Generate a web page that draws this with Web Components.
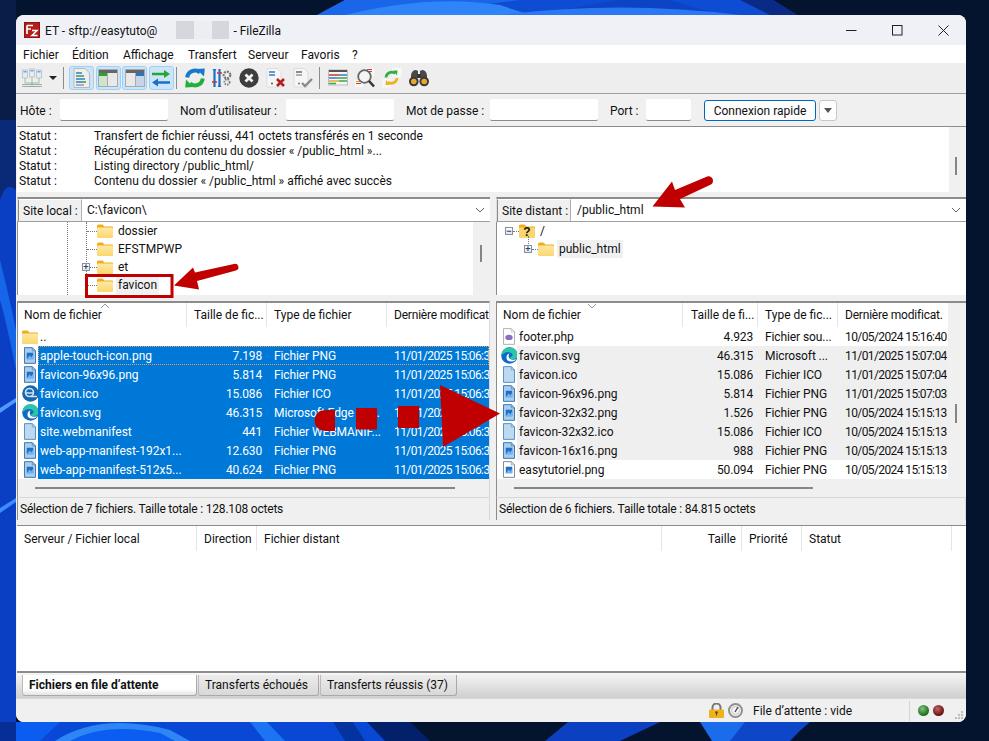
<!DOCTYPE html>
<html lang="fr"><head><meta charset="utf-8"><title>FileZilla</title>
<style>html,body{margin:0;padding:0;background:#04142e}body{font:12px Roboto,"Liberation Sans",sans-serif;color:#111}</style>
</head><body>
<fz-desktop>
  <fz-window>
    <fz-titlebar></fz-titlebar>
    <fz-menubar></fz-menubar>
    <fz-toolbar></fz-toolbar>
    <fz-quickconnect></fz-quickconnect>
    <fz-log></fz-log>
    <fz-panes></fz-panes>
    <fz-queue></fz-queue>
    <fz-tabs></fz-tabs>
    <fz-statusbar></fz-statusbar>
  </fz-window>
</fz-desktop>
<script>
const FONT = 'Roboto,"Liberation Sans",sans-serif';
const doc = (fill, stroke, inner='') => `<svg viewBox="0 0 13 18" width="12" height="17"><path d="M.5.5H9L12.5 4V17.500H.5z" fill="${fill}" stroke="${stroke}"/><path d="M9 .5V4h3.500" fill="none" stroke="${stroke}" opacity=".6"/>${inner}</svg>`;
const pic = `<rect x="3" y="6" width="7" height="7" fill="#1f6fc4"/><path d="M3 13l3-4 2 2 2-3v5z" fill="#6fb3ee"/>`;
const ICONS = {
 folder:`<svg viewBox="0 0 16 14" width="16" height="14"><defs><linearGradient id="g" x1="0" y1="0" x2="0" y2="1"><stop offset="0" stop-color="#fde9a6"/><stop offset="1" stop-color="#fbd66c"/></linearGradient></defs><path d="M0 2Q0 .5 1.500 .5H5.500L7.500 2.500H15Q16 2.500 16 3.500V6H0z" fill="#f2ad1c"/><rect y="3.500" width="16" height="10.500" rx="1.200" fill="url(#g)"/></svg>`,
 qfolder:`<svg viewBox="0 0 16 14" width="16" height="14"><path d="M0 2Q0 .5 1.500 .5H5.500L7.500 2.500H15Q16 2.500 16 3.500V6H0z" fill="#f2ad1c"/><rect y="3.500" width="16" height="10.500" rx="1.200" fill="#fbd66c"/><text x="8" y="12" text-anchor="middle" font-family="Liberation Sans" font-weight="700" font-size="12" fill="#111">?</text></svg>`,
 png:doc('#fff','#6f7f90',pic), pngsel:doc('#a9cdee','#2f6ea8',pic), blank:doc('#bcd9f2','#4b86bd'), php:doc('#fff','#a9a9a9','<ellipse cx="6.500" cy="10" rx="4" ry="2.800" fill="#8a6fc0"/>'),
 edge:`<svg viewBox="0 0 17 17" width="17" height="17"><circle cx="8.500" cy="8.500" r="8.300" fill="#0c6cc4"/><path d="M.6 8A8 8 0 0 1 16.800 8.500Q16.500 12 12 12 9 12 9 10.500 13 9 11 6.500 6 3 .6 8" fill="#2ec4a8"/><path d="M11 14.500Q5 15 5.500 9.500 6 7 8.500 6.500 6.800 9 8.500 11.500 12 14 16 11.500 14 14 11 14.500" fill="#fff"/></svg>`,
 ico:`<svg viewBox="0 0 17 17" width="17" height="17"><circle cx="8.500" cy="8.500" r="8.300" fill="#1666ad"/><circle cx="7.500" cy="7.500" r="4" fill="none" stroke="#cfe4f6" stroke-width="1.600"/><path d="M4 8h7M9 11.500h6" stroke="#cfe4f6" stroke-width="1.400"/></svg>`,
 site:`<svg viewBox="0 0 20 20" width="20" height="20"><g fill="#e4edf5" stroke="#b5bfc9" stroke-width=".8"><rect x=".5" y="2" width="5" height="8"/><rect x="7.500" y="1" width="5" height="8"/><rect x="14.500" y="2" width="5" height="8"/></g><g fill="#6ea9dd"><rect x="1.500" y="3" width="3" height="1.500"/><rect x="8.500" y="2" width="3" height="1.500"/><rect x="15.500" y="3" width="3" height="1.500"/></g><path d="M3 10v5h14v-5M10 9v6" stroke="#9cc39c" fill="none"/><path d="M0 16.500h20M0 18.500h20" stroke="#a8a8a8"/><circle cx="10" cy="16" r="1.500" fill="#9bb"/></svg>`,
 logbtn:`<svg viewBox="0 0 18 20" width="18" height="20"><path d="M1 .5H12L16.500 5V19.500H1z" fill="#eee" stroke="#b8b8b8"/><g stroke-width="1.500"><path d="M3 5h6M3 14h6" stroke="#2e7cc4"/><path d="M3 8h8" stroke="#30a04a"/><path d="M3 11h9" stroke="#2e7cc4"/><path d="M9 14h4" stroke="#30a04a"/><path d="M3 17h8" stroke="#999"/></g></svg>`,
 treeL:`<svg viewBox="0 0 20 18" width="20" height="18"><rect x=".5" y=".5" width="19" height="17" fill="#e9e9e9" stroke="#aaa"/><rect x="1" y="1" width="18" height="3" fill="#666"/><rect x="1" y="4" width="8" height="3" fill="#2aa52a"/><rect x="1" y="7" width="8" height="10" fill="#cfe3cf"/><path d="M9.500 4v13" stroke="#aaa"/></svg>`,
 treeR:`<svg viewBox="0 0 20 18" width="20" height="18"><rect x=".5" y=".5" width="19" height="17" fill="#e9e9e9" stroke="#aaa"/><rect x="1" y="1" width="18" height="3" fill="#666"/><rect x="11" y="4" width="8" height="3" fill="#2277c8"/><rect x="11" y="7" width="8" height="10" fill="#c6d6e6"/><path d="M10.500 4v13" stroke="#aaa"/></svg>`,
 sync:`<svg viewBox="0 0 20 17" width="20" height="17"><path d="M1 4h13" stroke="#25a62e" stroke-width="2.400"/><path d="M13 0l6 4-6 4z" fill="#25a62e"/><path d="M6 12.500h13" stroke="#1c6fc4" stroke-width="2.400"/><path d="M7 8.500l-6 4 6 4z" fill="#1c6fc4"/></svg>`,
 refresh:`<svg viewBox="0 0 20 20" width="20" height="20"><path d="M2.200 9.500A7.800 7.800 0 0 1 15 4.500" fill="none" stroke="#1679cc" stroke-width="4"/><path d="M11.500 1L19.800 .5 19 8.500z" fill="#1679cc"/><path d="M17.800 10.500A7.800 7.800 0 0 1 5 15.500" fill="none" stroke="#22b03a" stroke-width="4"/><path d="M8.500 19L.2 19.500 1 11.500z" fill="#22b03a"/></svg>`,
 filter:`<svg viewBox="0 0 20 20" width="20" height="20"><path d="M2.500 1v18" stroke="#1c6fc4" stroke-width="2.200"/><path d="M7.500 1v18" stroke="#1c6fc4" stroke-width="2.200"/><path d="M1 1l1.500 2L4 1M6 19l1.500-2L9 19" fill="none" stroke="#1c6fc4"/><path d="M5 5h5M0 14h5" stroke="#c33" stroke-width="1.500"/><circle cx="15" cy="7" r="3.300" fill="none" stroke="#777" stroke-width="2.200" stroke-dasharray="2 1"/><circle cx="15" cy="14" r="2.600" fill="none" stroke="#777" stroke-width="1.800" stroke-dasharray="1.500 1"/></svg>`,
 cancel:`<svg viewBox="0 0 20 20" width="20" height="20"><circle cx="10" cy="10" r="9.700" fill="#3d3d3d"/><path d="M6.500 6.500l7 7M13.500 6.500l-7 7" stroke="#f2f2f2" stroke-width="2.800"/></svg>`,
 discX:`<svg viewBox="0 0 20 20" width="20" height="20"><path d="M1 .5H11L15 4V19H1z" fill="#f6f6f6" stroke="#ddd"/><path d="M3 4h6" stroke="#2e7cc4" stroke-width="1.500"/><path d="M3 7h6" stroke="#2e7cc4" stroke-width="1.500"/><circle cx="6" cy="15.500" r=".9" fill="#444"/><path d="M11 11l7 7M18 11l-7 7" stroke="#b31d1d" stroke-width="2.600"/></svg>`,
 discC:`<svg viewBox="0 0 20 20" width="20" height="20"><path d="M1 .5H11L15 4V19H1z" fill="#f6f6f6" stroke="#ddd"/><path d="M3 4h6" stroke="#666" stroke-width="1.500"/><path d="M3 7h6" stroke="#999" stroke-width="1.500"/><circle cx="6" cy="15.500" r=".9" fill="#666"/><path d="M9 15l3 3 7-7" fill="none" stroke="#8a8a8a" stroke-width="2.400"/></svg>`,
 table:`<svg viewBox="0 0 20 18" width="20" height="18"><rect x=".5" y="1" width="19" height="15" fill="#f7f7f7" stroke="#bbb"/><rect x="1" y="1" width="18" height="2" fill="#555"/><path d="M1 6h10" stroke="#c33" stroke-width="1.400"/><path d="M11 6h8" stroke="#2e7cc4" stroke-width="1.400"/><path d="M1 9h8" stroke="#2e7cc4" stroke-width="1.400"/><path d="M9 9h10" stroke="#38a84a" stroke-width="1.400"/><path d="M1 12h10" stroke="#e0b020" stroke-width="1.400"/><path d="M11 12h8" stroke="#38a84a" stroke-width="1.400"/><path d="M1 14.500h7" stroke="#38a84a" stroke-width="1.400"/></svg>`,
 search:`<svg viewBox="0 0 20 20" width="20" height="20"><rect x="11" y="0" width="8" height="8" fill="#f8f8f8"/><path d="M12 1.500h5M12 3.500h5" stroke="#d33" /><rect x="0" y="12" width="8" height="7" fill="#f8f8f8"/><path d="M1 13.500h5" stroke="#e0a020"/><path d="M1 15.500h5" stroke="#d33"/><circle cx="9.500" cy="8.500" r="6.300" fill="#f4f4f4" stroke="#666" stroke-width="1.800"/><path d="M14 13l5 5.500" stroke="#333" stroke-width="2.600"/></svg>`,
 refreshF:`<svg viewBox="0 0 20 20" width="20" height="20"><rect x="10" y="0" width="9.500" height="9" fill="#f8f8f8"/><rect x="0" y="11" width="9" height="8.500" fill="#f8f8f8"/><path d="M4 9.500A5.500 5.500 0 0 1 13 5.500" fill="none" stroke="#2eaf3f" stroke-width="2.600"/><path d="M11 2.500l4.500 0 -.5 5z" fill="#2eaf3f"/><path d="M15 10A5.500 5.500 0 0 1 6 14" fill="none" stroke="#eeb11c" stroke-width="2.600"/><path d="M8 17l-4.500 0 .5-5z" fill="#eeb11c"/></svg>`,
 binoc:`<svg viewBox="0 0 20 17" width="20" height="17"><path d="M2 5Q3 0 7 0L9 1V8H2zM18 5Q17 0 13 0L11 1V8H18z" fill="#4a4a4a"/><rect x="8.500" y="4" width="3" height="4" fill="#333"/><circle cx="4.800" cy="11.500" r="4.800" fill="#3a3a3a"/><circle cx="15.200" cy="11.500" r="4.800" fill="#3a3a3a"/><circle cx="4.800" cy="11.500" r="2.800" fill="#e9a92c"/><circle cx="15.200" cy="11.500" r="2.800" fill="#e9a92c"/></svg>`,
 fz:`<svg viewBox="0 0 16 16" width="16" height="16"><rect width="16" height="16" fill="#b3201c"/><rect x=".5" y=".5" width="15" height="15" fill="none" stroke="#8e1310"/><path d="M3 3.500H9M3 3.500V12M3 7H7" stroke="#fff" stroke-width="1.700" fill="none"/><path d="M8 8.500H13L8 13.500H13.500" stroke="#fff" stroke-width="1.500" fill="none"/></svg>`,
 lock:`<svg viewBox="0 0 15 15" width="15" height="15"><path d="M3.500 7V4.500a4 4 0 0 1 8 0V7" fill="none" stroke="#777" stroke-width="2"/><rect y="6.500" width="15" height="8.500" rx="1" fill="#f0b21a"/><circle cx="7.500" cy="9.500" r="1.300" fill="#5a4a20"/><rect x="7" y="9.500" width="1" height="3" fill="#5a4a20"/></svg>`,
 gauge:`<svg viewBox="0 0 15 15" width="15" height="15"><circle cx="7.500" cy="7.500" r="6.500" fill="#f4f4f4" stroke="#8f8f8f" stroke-width="2"/><circle cx="7.500" cy="7.500" r="4" fill="none" stroke="#c4c4c4"/><path d="M7 9l3-5" stroke="#444" stroke-width="1.300"/></svg>`
};
function def(name, css, html, connected){
  customElements.define(name, class extends HTMLElement{
    constructor(){super();const s=this.attachShadow({mode:'open'});
      s.innerHTML=`<style>${css}</style>`+html;}
    connectedCallback(){ if(connected) connected.call(this); }
  });
}
def('fz-icon',':host{display:inline-flex;flex:none;align-items:center;justify-content:center;line-height:0}svg{display:block}','<span id="i" style="display:contents"></span>',
 function(){this.shadowRoot.getElementById('i').innerHTML=ICONS[this.getAttribute('name')]||''});

def('fz-desktop',`:host{display:block;position:relative;width:989px;height:741px;overflow:hidden;box-sizing:border-box;padding:15px 23px 19px 16px;background:#04142e}
 svg{position:absolute;left:0;top:0}.wp{z-index:0}.an{z-index:5;pointer-events:none}::slotted(*){position:relative;z-index:1}`,
`<svg class="wp" width="989" height="741" viewBox="0 0 989 741">
 <rect width="989" height="741" fill="#04142e"/><path d="M0 0H16V741H0z" fill="#0a3fc4"/><path d="M0 0H16V120H0z" fill="#0a1c48"/><path d="M0 120H16V190Q6 180 0 200z" fill="#0a2a78"/><path d="M0 408L16 398V402L0 413z" fill="#4e9cff"/><path d="M0 508L16 498V502L0 513z" fill="#3d8bff"/><path d="M0 260Q10 300 16 330V370Q6 320 0 300z" fill="#1666ea"/>
 <path d="M317 15L345 0H773L797 15z" fill="#0f4cd4"/><path d="M317 15L345 0H520L400 15z" fill="#1a66e8"/><path d="M345 15Q430 -6 500 5L530 15z" fill="#2f84f8"/><path d="M530 15L620 0H670L720 15z" fill="#0c44c4"/><path d="M500 15Q620 0 740 15z" fill="#2c78f4"/><path d="M740 0H773L797 15H770z" fill="#0a2a86"/>
 <path d="M0 722H410L400 741H0z" fill="#0948d4"/><path d="M0 722H16V741H0z" fill="#072e96"/><path d="M16 722H60L40 741H16z" fill="#0b5cf0"/><path d="M55 741Q100 712 170 730L190 741z" fill="#2e86f5"/><path d="M70 741Q105 722 160 733L175 741z" fill="#0b5cf0"/><path d="M250 722H267L285 741H265z" fill="#1c74f2"/><path d="M333 722H353L365 741H345z" fill="#0433a0"/><path d="M367 722H410L430 741H385z" fill="#03206a"/><path d="M568 722H660L620 741H545z" fill="#0b40c0"/><path d="M700 722H810Q800 730 790 741H715z" fill="#0d47c8"/><path d="M700 722H745L730 741H712z" fill="#1a6ceb"/></svg>
 <slot></slot>
 <svg class="an" width="989" height="741" viewBox="0 0 989 741"><g fill="#c00000" stroke="none">
  <rect x="86.500" y="275.500" width="85.500" height="21" fill="none" stroke="#c00000" stroke-width="3"/>
  <path d="M174 285.500L193 267.500 195 272.500 234 264A3.300 3.300 0 0 1 236 270.500L197 281 199 289.500z"/>
  <path d="M652.500 206.500L672 181.500 675 190 706 177A4.500 4.500 0 0 1 711 184.500L680 199 685 207.500z"/>
  <path d="M335 410H325A10.500 10.500 0 0 0 325 431H335z"/><rect x="356" y="408" width="21" height="21.500"/><rect x="398" y="406" width="21" height="22"/><path d="M440 385L500 413.500 443 447z"/>
 </g></svg>`);

def('fz-window',`:host{display:flex;flex-direction:column;height:707px;width:950px;background:#f0f0f0;border-radius:8px;overflow:hidden}`,'<slot></slot>');

def('fz-titlebar',`:host{display:flex;align-items:center;height:30px;background:#eff1f7;font:12px ${FONT};flex:none}
 .ic{margin-left:8px;margin-right:5px}.bl{display:flex;height:18px;width:71px;margin:0 4px 0 1px}.bl i{flex:1}
 .tx{padding-top:1px}.sp{flex:1}.b{width:46px;height:30px;display:flex;align-items:center;justify-content:center}`,
`<fz-icon class="ic" name="fz"></fz-icon><span class="tx">ET - sftp://easytuto@</span><span class="bl"><i style="background:#eef0f4"></i><i style="background:#d5d7dc"></i><i style="background:#eceef2"></i><i style="background:#d5d7dc"></i></span><span class="tx">- FileZilla</span><span class="sp"></span>
 <span class="b"><svg width="11" height="11"><path d="M0 5.500h10.500" stroke="#222"/></svg></span><span class="b"><svg width="11" height="11"><rect x=".5" y=".5" width="9.500" height="9.500" fill="none" stroke="#222"/></svg></span><span class="b"><svg width="11" height="11"><path d="M.5.5l10 10M10.500.5l-10 10" stroke="#222"/></svg></span>`);

def('fz-menubar',`:host{display:flex;height:18px;box-sizing:border-box;background:#fff;flex:none;align-items:center;padding:2px 0 0 7px;font:12px ${FONT}}`,
 [['Fichier',49],['Édition',51],['Affichage',65],['Transfert',60],['Serveur',53],['Favoris',51],['?',10]].map(t=>`<span style="width:${t[1]}px">${t[0]}</span>`).join(''));

def('fz-toolbar',`:host{display:flex;height:31px;box-sizing:border-box;background:#eee;border-bottom:1px solid #a0a0a0;flex:none;align-items:center;padding-left:6px}
 .sep{width:1px;height:22px;background:#8c8c8c;flex:none}
 .tg{display:flex;align-items:center;justify-content:center;width:25px;height:24px;box-sizing:border-box;background:#cce4f7;border:1px solid #99d1ff;border-radius:3px;margin-right:1.500px;flex:none}
 .ar{width:0;height:0;border:4px solid transparent;border-top:4px solid #222;border-bottom:0;margin:0 6px 0 7px}
 fz-icon{width:20px}.n{margin-right:7px}`,
 `<fz-icon name="site"></fz-icon><span class="ar"></span><span class="sep" style="margin-right:5px"></span>
 <span class="tg"><fz-icon name="logbtn"></fz-icon></span><span class="tg"><fz-icon name="treeL"></fz-icon></span><span class="tg"><fz-icon name="treeR"></fz-icon></span><span class="tg"><fz-icon name="sync"></fz-icon></span>
 <span class="sep" style="margin:0 8px 0 1px"></span>
 <fz-icon class="n" name="refresh"></fz-icon><fz-icon class="n" name="filter"></fz-icon><fz-icon class="n" name="cancel"></fz-icon><fz-icon class="n" name="discX"></fz-icon><fz-icon name="discC"></fz-icon>
 <span class="sep" style="margin:0 8px 0 6px"></span>
 <fz-icon class="n" name="table"></fz-icon><fz-icon class="n" name="search"></fz-icon><fz-icon class="n" name="refreshF"></fz-icon><fz-icon name="binoc"></fz-icon>`);

def('fz-quickconnect',`:host{display:flex;height:32px;background:#f0f0f0;flex:none;align-items:center;padding-left:4px;font:12px ${FONT};box-sizing:border-box}
 i{display:block;height:22px;background:#fff;border-bottom:1px solid #8a8a8a;box-sizing:border-box;border-radius:2px;flex:none}
 span{white-space:nowrap;padding-top:1px;box-sizing:border-box}.btn{display:flex;align-items:center;justify-content:center;width:112px;height:21px;box-sizing:border-box;background:#fdfdfd;border:1px solid #0067c0;border-radius:3px;margin-left:13px}
 .dd{display:flex;align-items:center;justify-content:center;width:18px;height:21px;box-sizing:border-box;background:#fdfdfd;border:1px solid #c8c8c8;border-radius:3px;margin-left:3px}
 .dd b{width:0;height:0;border:4px solid transparent;border-top:5px solid #555;border-bottom:0}`,
 `<span style="width:40px">Hôte :</span><i style="width:108px"></i><span style="width:106px;margin-left:12px">Nom d’utilisateur :</span><i style="width:108px"></i><span style="width:84px;margin-left:12px">Mot de passe :</span><i style="width:108px"></i><span style="width:36px;margin-left:12px">Port :</span><i style="width:45px"></i><span class="btn">Connexion rapide</span><span class="dd"><b></b></span>`);

def('fz-log',`:host{display:flex;height:66px;flex:none;background:#fff;border-top:1px solid #8c8c8c;box-sizing:border-box;margin-left:1px;font:12px ${FONT}}
 .t{flex:1;padding-top:2px}.r{display:flex;height:15px;line-height:15px;white-space:nowrap;padding-left:2px}.r b{font-weight:400;width:75px;flex:none}
 .s{width:17px;background:#f0f0f0;display:flex;padding:30px 0 0 6px;box-sizing:border-box}.s u{display:block;width:2px;height:18px;background:#858585}`,
 `<div class="t">${[['Transfert de fichier réussi, 441 octets transférés en 1 seconde'],['Récupération du contenu du dossier « /public_html »...'],['Listing directory /public_html/'],['Contenu du dossier « /public_html » affiché avec succès']].map(m=>`<div class="r"><b>Statut :</b><span>${m[0]}</span></div>`).join('')}</div><div class="s"><u></u></div>`);

def('fz-panes',`:host{display:grid;grid-template-columns:473px 470px;column-gap:6px;padding:5px 0 0 1px;flex:none;height:328px;box-sizing:border-box;background:#f0f0f0}`,
 `<fz-pane side="local"></fz-pane><fz-pane side="remote"></fz-pane>`);

const DATA={
 local:{label:'Site local :',labelW:64,path:'C:\\favicon\\',pathPad:5,status:'Sélection de 7 fichiers. Taille totale : 128.108 octets',
  head:['Nom de fichier','Taille de fic...','Type de fichier','Dernière modificat'],cols:[169,80,120,102],iconW:20,sort:'up',sortX:82,
  rows:[['folder','..','','','',0],['pngsel','apple-touch-icon.png','7.198','Fichier PNG','11/01/2025 15:06:3',1],['pngsel','favicon-96x96.png','5.814','Fichier PNG','11/01/2025 15:06:3',1],['ico','favicon.ico','15.086','Fichier ICO','11/01/2025 15:06:3',1],['edge','favicon.svg','46.315','Microsoft Edge HT...','11/01/2025 15:06:3',1],['blank','site.webmanifest','441','Fichier WEBMANIF...','11/01/2025 15:06:3',1],['pngsel','web-app-manifest-192x1...','12.630','Fichier PNG','11/01/2025 15:06:3',1],['pngsel','web-app-manifest-512x5...','40.624','Fichier PNG','11/01/2025 15:06:3',1]],
  thumb:[17,420],pad2:7},
 remote:{label:'Site distant :',labelW:74,path:'/public_html',pathPad:6,status:'Sélection de 6 fichiers. Taille totale : 84.815 octets',
  head:['Nom de fichier','Taille de fi...','Type de fic...','Dernière modificat.'],cols:[186,75,80,109],iconW:20,sort:'down',sortX:90,
  rows:[['php','footer.php','4.923','Fichier sou...','10/05/2024 15:16:40',0],['edge','favicon.svg','46.315','Microsoft ...','11/01/2025 15:07:04',2],['blank','favicon.ico','15.086','Fichier ICO','11/01/2025 15:07:04',2],['pngsel','favicon-96x96.png','5.814','Fichier PNG','11/01/2025 15:07:03',2],['pngsel','favicon-32x32.png','1.526','Fichier PNG','10/05/2024 15:15:13',2],['blank','favicon-32x32.ico','15.086','Fichier ICO','10/05/2024 15:15:13',2],['pngsel','favicon-16x16.png','988','Fichier PNG','10/05/2024 15:15:13',2],['png','easytutoriel.png','50.094','Fichier PNG','10/05/2024 15:15:13',0]],
  thumb:[17,299],sb:[101,19],pad2:8}
};
const TREES={
 local:`<div class="vline" style="left:49px"></div><div class="vline" style="left:68px;height:62px"></div>
  ${[['dossier',0],['EFSTMPWP',0],['et',1],['favicon',0,1]].map(r=>`<div class="tr" style="padding-left:79px"><span class="dots" style="left:69px;width:10px"></span>${r[1]?'<span class="bx" style="left:64px">+</span>':''}<fz-icon name="folder"></fz-icon><span class="l ${r[2]?'hl':''}">${r[0]}</span></div>`).join('')}`,
 remote:`<div class="tr" style="padding-left:22px"><span class="bx" style="left:8px">−</span><span class="dots" style="left:16px;width:6px"></span><fz-icon name="qfolder"></fz-icon><span class="l">/</span></div>
  <div class="vline" style="left:31px;top:14px;height:10px"></div>
  <div class="tr" style="padding-left:41px"><span class="bx" style="left:27px">+</span><span class="dots" style="left:35px;width:6px"></span><fz-icon name="folder"></fz-icon><span class="l hl">public_html</span></div>`
};
def('fz-pane',`:host{display:flex;flex-direction:column;height:323px;font:12px ${FONT};min-width:0}
 .bar{display:flex;height:25px;box-sizing:border-box;background:#fff;border-top:2px solid #8c8c8c;border-bottom:1px solid #a0a0a0;border-left:1px solid #e0e0e0;flex:none}
 .lab{background:#f0f0f0;border-right:1px solid #b0b0b0;display:flex;align-items:center;padding-left:4px;box-sizing:border-box;flex:none;border-left:1px solid #888;border-top:1px solid #fff}
 .path{flex:1;display:flex;align-items:center}.chev{margin:0 5px}
 .tree{height:73px;flex:none;display:flex;background:#fff;border-left:1px solid #8c8c8c;box-sizing:border-box}
 .tc{flex:1;position:relative;overflow:hidden}
 .tr{position:relative;display:flex;align-items:center;height:18px;white-space:nowrap}
 .tr .l{margin-left:3px;padding:0 2px;height:18px;line-height:18px}.hl{background:#f0f0f0}
 .vline{position:absolute;top:0;height:73px;border-left:1px dotted #777}
 .dots{position:absolute;top:9px;border-top:1px dotted #777}
 .bx{position:absolute;top:5px;width:8px;height:8px;box-sizing:border-box;border:1px solid #8a8f9c;background:linear-gradient(#fff,#dfe3ea);font:700 9px/6px "Liberation Sans";text-align:center;color:#2b3d77;z-index:1}
 .sb{width:17px;background:#f0f0f0;display:flex;flex:none;padding-left:7px;box-sizing:border-box}.sb u{display:block;width:2px;height:17px;margin-top:23px;background:#858585}
 .gap{height:6px;flex:none}
 .list{flex:none;height:196px;background:#fff;border-top:2px solid #8c8c8c;border-left:1px solid #8c8c8c;box-sizing:border-box;display:flex;flex-direction:column;position:relative}
 .list.lr{border-right:1px solid #d9d9d9}
 .head{display:grid;height:24px;flex:none;align-items:stretch}
 .head span{display:flex;align-items:center;padding-left:7px;border-right:1px solid #e5e5e5;margin:0;white-space:nowrap;overflow:hidden;box-sizing:border-box}
 .head span:first-child{padding-left:6px}.head span:last-child{letter-spacing:-.2px;border-right:0}
 .sort{position:absolute;top:0}
 .rows{height:152px;flex:none;position:relative;display:flex;flex-direction:column}
 .row{display:flex;height:19px;flex:none}.ic{display:flex;align-items:center;justify-content:center;flex:none;box-sizing:border-box;padding-left:4px}
 .cells{display:grid;flex:1;min-width:0;height:19px}
 .cells span{white-space:nowrap;overflow:hidden;height:19px;line-height:21px}.nm{padding-left:2px}.sz{text-align:right;padding-right:5px;letter-spacing:-.15px}.ty{padding-left:7px;letter-spacing:-.1px}.dt{padding-left:7px;letter-spacing:-.6px}
 .s1 .cells{background:#0078d7;color:#fff}.s2 .cells{background:#efefef}
 .s1.first .cells{outline:1px dotted #e8a060;outline-offset:-1px}
 .hs{height:18px;display:flex;align-items:center;flex:none;background:#f0f0f0}.hs u{display:block;height:2px;background:#858585}
 .vs{position:absolute;right:0;top:0;bottom:0;width:18px;background:#f0f0f0}.vs u{position:absolute;left:7px;width:2px;background:#858585}
 .st{height:23px;flex:none;display:flex;align-items:center;padding-left:2px;background:#f0f0f0;border-top:1px solid #d9d9d9;border-left:1px solid #8c8c8c;border-right:1px solid #d9d9d9;box-sizing:border-box;white-space:nowrap;letter-spacing:-.2px}`,
 `<div id="r" style="display:contents"></div>`,
 function(){
 const side=this.getAttribute('side'),d=DATA[side];
 const cols=d.cols.map(c=>c+'px').join(' ');
 const cellCols=[d.cols[0]-d.iconW,...d.cols.slice(1)].map(c=>c+'px').join(' ');
 const scroll=d.sb?`<div class="vs"><u style="top:${d.sb[0]}px;height:${d.sb[1]}px"></u></div>`:'';
 const caret=d.sort==='up'?'M1 5L5 1 9 5':'M1 1L5 5 9 1';
 this.shadowRoot.getElementById('r').innerHTML=`
 <div class="bar"><span class="lab" style="width:${d.labelW}px">${d.label}</span><span class="path" style="padding-left:${d.pathPad}px">${d.path}</span><svg class="chev" width="10" height="22" viewBox="0 0 10 22"><path d="M1 9l4 4 4-4" fill="none" stroke="#666"/></svg></div>
 <div class="tree"><div class="tc">${TREES[side]}</div>${side==='local'?'<div class="sb"><u></u></div>':''}</div>
 <div class="gap"></div>
 <div class="list ${side==='local'?'lr':''}"><svg class="sort" style="left:${d.sortX}px" width="10" height="6"><path d="${caret}" fill="none" stroke="#9a9a9a"/></svg>
  <div class="head" style="grid-template-columns:${cols}">${d.head.map((h,i)=>`<span ${i==1?`style="padding-left:${d.pad2}px"`:''}>${h}</span>`).join('')}</div>
  <div class="rows">${d.rows.map((r,i)=>`<div class="row s${r[5]} ${i==1?'first':''}"><span class="ic" style="width:${d.iconW}px"><fz-icon name="${r[0]}"></fz-icon></span><div class="cells" style="grid-template-columns:${cellCols}"><span class="nm">${r[1]}</span><span class="sz">${r[2]}</span><span class="ty">${r[3]}</span><span class="dt">${r[4]}</span></div></div>`).join('')}</div>
  <div class="hs"><u style="margin-left:${d.thumb[0]}px;width:${d.thumb[1]}px"></u></div>${scroll}
 </div>
 <div class="st">${d.status}</div>`;
 });

def('fz-queue',`:host{display:flex;flex-direction:column;height:148px;margin:5px 0 0 1px;flex:none;background:#fff;border-top:1px solid #8c8c8c;border-bottom:2px solid #8c8c8c;box-sizing:border-box;font:12px ${FONT}}
 .h{display:grid;grid-template-columns:180px 60px 405px 80px 60px 150px;height:25px;width:936px}
 .h span{display:flex;align-items:center;padding-left:7px;border-right:1px solid #e5e5e5;box-sizing:border-box;white-space:nowrap}.h .rt{justify-content:flex-end;padding-right:5px}`,
 `<div class="h"><span>Serveur / Fichier local</span><span>Direction</span><span>Fichier distant</span><span class="rt">Taille</span><span>Priorité</span><span>Statut</span></div>`);

def('fz-tabs',`:host{display:flex;height:26px;flex:none;background:linear-gradient(#f6f6f6,#cfcfcf);padding:2px 0 0 6px;box-sizing:border-box;font:12px ${FONT};border-bottom:1px solid #d9d9d9}
 span{display:flex;align-items:center;height:21px;box-sizing:border-box;padding-left:6px;border:1px solid #a9a9a9;border-top:0;border-left-color:#bbb;border-radius:0 0 3px 3px;background:linear-gradient(#ececec,#d8d8d8);white-space:nowrap;margin-right:1px}
 .a{background:linear-gradient(#fff 70%,#e4e4e4);font-weight:700;width:175px}`,
 `<span class="a">Fichiers en file d’attente</span><span style="width:121px">Transferts échoués</span><span style="width:137px">Transferts réussis (37)</span>`);

def('fz-statusbar',`:host{display:flex;flex:1;align-items:center;background:#f0f0f0;font:12px ${FONT};position:relative}
 fz-icon.l{margin-left:693px}fz-icon.g{margin-left:4px}.t{margin-left:10px;width:156px;white-space:nowrap}
 .sep{width:1px;height:20px;background:#d5d5d5}.led{width:11px;height:11px;border-radius:50%;flex:none}
 .grip{position:absolute;right:2px;bottom:2px}`,
 `<fz-icon class="l" name="lock"></fz-icon><fz-icon class="g" name="gauge"></fz-icon><span class="t">File d’attente : vide</span><span class="sep"></span>
 <span class="led" style="margin-left:8px;background:radial-gradient(circle at 40% 35%,#7fc47f,#1c6b1c 70%)"></span><span class="led" style="margin-left:4px;background:radial-gradient(circle at 40% 35%,#b66,#6b0f0f 70%)"></span>
 <svg class="grip" width="10" height="10"><g fill="#bdbdbd"><rect x="7" y="1" width="2" height="2"/><rect x="4" y="4" width="2" height="2"/><rect x="7" y="4" width="2" height="2"/><rect x="1" y="7" width="2" height="2"/><rect x="4" y="7" width="2" height="2"/><rect x="7" y="7" width="2" height="2"/></g></svg>`);
</script>
</body></html>
